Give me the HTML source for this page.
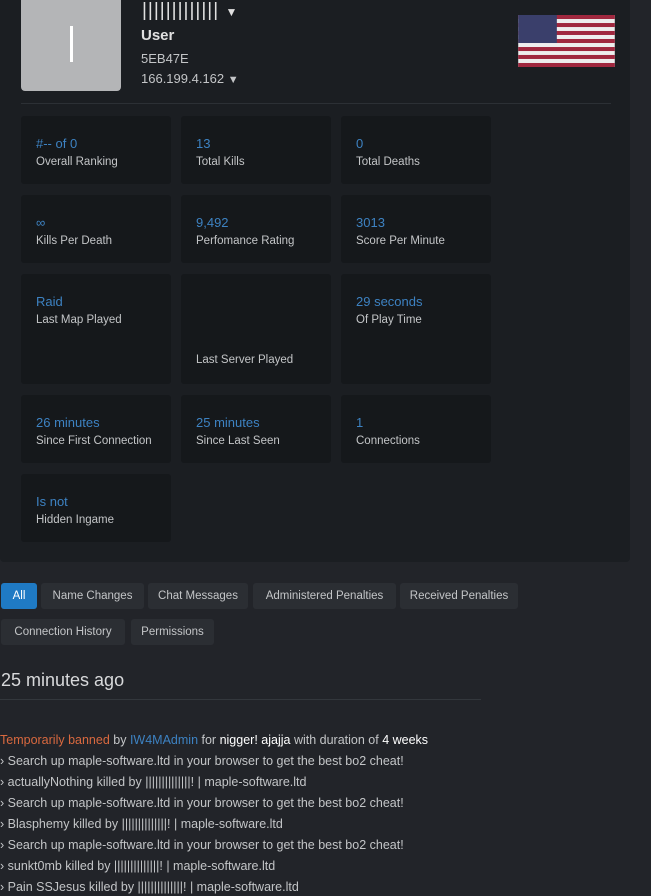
<!DOCTYPE html>
<html><head><style>
body{margin:0;width:651px;height:896px;background:#222429;font-family:"Liberation Sans",sans-serif;overflow:hidden;position:relative;color:#c8c9cb}
.panel{position:absolute;left:0;top:-10px;width:630px;height:572px;background:#1b1e22;border-radius:4px}
.a{position:absolute}
.card{position:absolute;width:150px;background:#15181b;border-radius:3px}
.card .v{position:absolute;left:15px;top:20px;font-size:13px;color:#3d82c2}
.card .l{position:absolute;left:15px;top:40px;font-size:11.5px;color:#c3c5c7}
.btn{position:absolute;height:26px;line-height:26px;font-size:11.5px;background:#2b2e33;color:#c3c5c7;border-radius:3px;text-align:center}
.line{position:absolute;left:0;font-size:12.5px;color:#c3c5c7;white-space:nowrap}
.line b{font-weight:normal;color:#c8c9cb}
</style></head><body>
<div class="panel"></div>
<div class="a" style="left:21px;top:0;width:100px;height:91px;background:#b4b5b7;border-radius:0 0 4px 4px"></div>
<div class="a" style="left:70px;top:26px;width:3px;height:36px;background:#fff"></div>
<div class="a" style="left:142px;top:0px;font-size:19px;color:#e0e0e0;letter-spacing:1px">||||||||||||| <span style="font-size:12px">▼</span></div>
<div class="a" style="left:141px;top:27px;font-size:15px;font-weight:bold;color:#e0e0e0">User</div>
<div class="a" style="left:141px;top:51px;font-size:13px;color:#c3c5c7">5EB47E</div>
<div class="a" style="left:141px;top:71px;font-size:13px;color:#c3c5c7">166.199.4.162 <span style="font-size:11px">▼</span></div>
<svg class="a" style="left:518px;top:15px" width="97" height="52" viewBox="0 0 13 7">
<rect width="13" height="7" fill="#eee"/>
<g fill="#a0283f"><rect y="0" width="13" height=".54"/><rect y="1.08" width="13" height=".54"/><rect y="2.15" width="13" height=".54"/><rect y="3.23" width="13" height=".54"/><rect y="4.31" width="13" height=".54"/><rect y="5.38" width="13" height=".54"/><rect y="6.46" width="13" height=".54"/></g>
<rect width="5.2" height="3.77" fill="#3a3f6b"/></svg>
<div class="a" style="left:21px;top:103px;width:590px;height:1px;background:#2c3035"></div>

<div class="card" style="left:21px;top:116px;height:68px"><div class="v">#-- of 0</div><div class="l">Overall Ranking</div></div>
<div class="card" style="left:181px;top:116px;height:68px"><div class="v">13</div><div class="l">Total Kills</div></div>
<div class="card" style="left:341px;top:116px;height:68px"><div class="v">0</div><div class="l">Total Deaths</div></div>
<div class="card" style="left:21px;top:195px;height:68px"><div class="v">∞</div><div class="l">Kills Per Death</div></div>
<div class="card" style="left:181px;top:195px;height:68px"><div class="v">9,492</div><div class="l">Perfomance Rating</div></div>
<div class="card" style="left:341px;top:195px;height:68px"><div class="v">3013</div><div class="l">Score Per Minute</div></div>
<div class="card" style="left:21px;top:274px;height:110px"><div class="v">Raid</div><div class="l">Last Map Played</div></div>
<div class="card" style="left:181px;top:274px;height:110px"><div class="l" style="top:80px">Last Server Played</div></div>
<div class="card" style="left:341px;top:274px;height:110px"><div class="v">29 seconds</div><div class="l">Of Play Time</div></div>
<div class="card" style="left:21px;top:395px;height:68px"><div class="v">26 minutes</div><div class="l">Since First Connection</div></div>
<div class="card" style="left:181px;top:395px;height:68px"><div class="v">25 minutes</div><div class="l">Since Last Seen</div></div>
<div class="card" style="left:341px;top:395px;height:68px"><div class="v">1</div><div class="l">Connections</div></div>
<div class="card" style="left:21px;top:474px;height:68px"><div class="v">Is not</div><div class="l">Hidden Ingame</div></div>

<div class="btn" style="left:1px;top:583px;width:36px;background:#1f7ac4;color:#fff">All</div>
<div class="btn" style="left:41px;top:583px;width:103px">Name Changes</div>
<div class="btn" style="left:148px;top:583px;width:100px">Chat Messages</div>
<div class="btn" style="left:253px;top:583px;width:143px">Administered Penalties</div>
<div class="btn" style="left:400px;top:583px;width:118px">Received Penalties</div>
<div class="btn" style="left:1px;top:619px;width:124px">Connection History</div>
<div class="btn" style="left:131px;top:619px;width:83px">Permissions</div>

<div class="a" style="left:1px;top:670px;font-size:18px;color:#d8d9db">25 minutes ago</div>
<div class="a" style="left:0;top:699px;width:481px;height:1px;background:#33373c"></div>

<div class="line" style="top:733px"><span style="color:#d9693f">Temporarily banned</span> by <span style="color:#3d82c2">IW4MAdmin</span> for <b style="color:#fff">nigger! ajajja</b> with duration of <b style="color:#fff">4 weeks</b></div>
<div class="line" style="top:754px">› Search up maple-software.ltd in your browser to get the best bo2 cheat!</div>
<div class="line" style="top:775px">› actuallyNothing killed by ||||||||||||||! | maple-software.ltd</div>
<div class="line" style="top:796px">› Search up maple-software.ltd in your browser to get the best bo2 cheat!</div>
<div class="line" style="top:817px">› Blasphemy killed by ||||||||||||||! | maple-software.ltd</div>
<div class="line" style="top:838px">› Search up maple-software.ltd in your browser to get the best bo2 cheat!</div>
<div class="line" style="top:859px">› sunkt0mb killed by ||||||||||||||! | maple-software.ltd</div>
<div class="line" style="top:880px">› Pain SSJesus killed by ||||||||||||||! | maple-software.ltd</div>
</body></html>
